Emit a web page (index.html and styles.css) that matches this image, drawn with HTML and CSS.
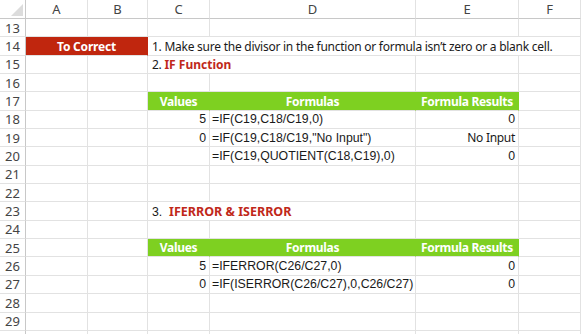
FILE: index.html
```html
<!DOCTYPE html>
<html>
<head>
<meta charset="utf-8">
<link rel="stylesheet" href="styles.css">
</head>
<body>
<div class="sheet">
  <div class="corner"><span class="tri"></span></div>
  <div class="ch">A</div><div class="ch">B</div><div class="ch">C</div><div class="ch">D</div><div class="ch">E</div><div class="ch last">F</div>

  <div class="rh">13</div><div class="c"></div><div class="c"></div><div class="c"></div><div class="c"></div><div class="c"></div><div class="c"></div>

  <div class="rh">14</div><div class="c red span2">To Correct</div><div class="c txt span4"><span>1. Make sure the divisor in the function or formula isn’t zero or a blank cell.</span></div>

  <div class="rh">15</div><div class="c"></div><div class="c"></div><div class="c txt span2"><span>2. <b class="title">IF Function</b></span></div><div class="c"></div><div class="c"></div>

  <div class="rh">16</div><div class="c"></div><div class="c"></div><div class="c"></div><div class="c"></div><div class="c"></div><div class="c"></div>

  <div class="rh">17</div><div class="c"></div><div class="c"></div><div class="c green center">Values</div><div class="c green center">Formulas</div><div class="c green right">Formula Results</div><div class="c"></div>

  <div class="rh">18</div><div class="c"></div><div class="c"></div><div class="c num">5</div><div class="c fx">=IF(C19,C18/C19,0)</div><div class="c num">0</div><div class="c"></div>

  <div class="rh">19</div><div class="c"></div><div class="c"></div><div class="c num">0</div><div class="c fx">=IF(C19,C18/C19,"No Input")</div><div class="c narrow">No Input</div><div class="c"></div>

  <div class="rh">20</div><div class="c"></div><div class="c"></div><div class="c"></div><div class="c fx">=IF(C19,QUOTIENT(C18,C19),0)</div><div class="c num">0</div><div class="c"></div>

  <div class="rh">21</div><div class="c"></div><div class="c"></div><div class="c"></div><div class="c"></div><div class="c"></div><div class="c"></div>

  <div class="rh">22</div><div class="c"></div><div class="c"></div><div class="c"></div><div class="c"></div><div class="c"></div><div class="c"></div>

  <div class="rh">23</div><div class="c"></div><div class="c"></div><div class="c txt span2"><span><span class="fxfont">3.&nbsp; </span><b class="title title2">IFERROR &amp; ISERROR</b></span></div><div class="c"></div><div class="c"></div>

  <div class="rh">24</div><div class="c"></div><div class="c"></div><div class="c"></div><div class="c"></div><div class="c"></div><div class="c"></div>

  <div class="rh">25</div><div class="c"></div><div class="c"></div><div class="c green center">Values</div><div class="c green center">Formulas</div><div class="c green right">Formula Results</div><div class="c"></div>

  <div class="rh">26</div><div class="c"></div><div class="c"></div><div class="c num">5</div><div class="c fx">=IFERROR(C26/C27,0)</div><div class="c num">0</div><div class="c"></div>

  <div class="rh">27</div><div class="c"></div><div class="c"></div><div class="c num">0</div><div class="c fx">=IF(ISERROR(C26/C27),0,C26/C27)</div><div class="c num">0</div><div class="c"></div>

  <div class="rh">28</div><div class="c"></div><div class="c"></div><div class="c"></div><div class="c"></div><div class="c"></div><div class="c"></div>

  <div class="rh">29</div><div class="c"></div><div class="c"></div><div class="c"></div><div class="c"></div><div class="c"></div><div class="c"></div>

  <div class="rh"></div><div class="c"></div><div class="c"></div><div class="c"></div><div class="c"></div><div class="c"></div><div class="c"></div>
</div>
</body>
</html>
```
FILE: styles.css
```css
html, body {
  margin: 0;
  padding: 0;
  background: #ffffff;
  overflow: hidden;
}
.sheet {
  width: 581px;
  height: 334px;
  display: grid;
  grid-template-columns: 26px 62px 60px 62px 206px 103px 62px;
  grid-template-rows: 19px repeat(18, 18.35px);
  font-family: "Noto Sans", sans-serif;
  color: #1a1a1a;
  overflow: hidden;
}
.corner {
  position: relative;
  border-right: 1px solid #c8c8c8;
  border-bottom: 1px solid #c8c8c8;
  box-sizing: border-box;
}
.tri {
  position: absolute;
  right: 2px;
  bottom: 2px;
  width: 0;
  height: 0;
  border-left: 12px solid transparent;
  border-bottom: 12px solid #dcdcdc;
}
.ch {
  box-sizing: border-box;
  border-right: 1px solid #e2e2e2;
  border-bottom: 1px solid #c8c8c8;
  display: flex;
  align-items: center;
  justify-content: center;
  font-size: 13px;
  color: #444;
}
.rh {
  box-sizing: border-box;
  border-right: 1px solid #c8c8c8;
  border-bottom: 1px solid #e2e2e2;
  display: flex;
  align-items: center;
  justify-content: center;
  font-size: 13px;
  color: #444;
}
.c {
  box-sizing: border-box;
  border-right: 1px solid #e2e2e2;
  border-bottom: 1px solid #e2e2e2;
  display: flex;
  align-items: center;
  white-space: nowrap;
  padding: 0 3px;
  font-size: 12px;
  min-width: 0;
}
.span2 { grid-column: span 2; }
.span4 { grid-column: span 4; }
.txt {
  font-size: 12px;
  letter-spacing: -0.25px;
  padding-left: 4px;
}
.title {
  color: #c0281a;
  font-weight: 700;
  letter-spacing: 0;
}
.title2 {
  font-size: 12.5px;
}
.fxfont {
  font-family: "Liberation Sans", sans-serif;
  font-size: 12.3px;
  letter-spacing: 0;
}
.red {
  background: #c0260e;
  color: #fff;
  font-weight: 700;
  justify-content: center;
  font-size: 12px;
  letter-spacing: -0.2px;
  border-right-color: #c0260e;
}
.green {
  background: #7ed021;
  color: #fff;
  font-weight: 700;
  font-size: 12px;
  letter-spacing: -0.3px;
  border-right-color: #7ed021;
}
.center { justify-content: center; }
.right { justify-content: flex-end; padding-right: 5px; }
.num {
  justify-content: flex-end;
  font-family: "Liberation Sans", sans-serif;
  font-size: 12.3px;
}
.fx {
  font-family: "Liberation Sans", sans-serif;
  font-size: 12.3px;
  padding-left: 2px;
}
.narrow {
  justify-content: flex-end;
  font-size: 12px;
  letter-spacing: -0.3px;
}
```
